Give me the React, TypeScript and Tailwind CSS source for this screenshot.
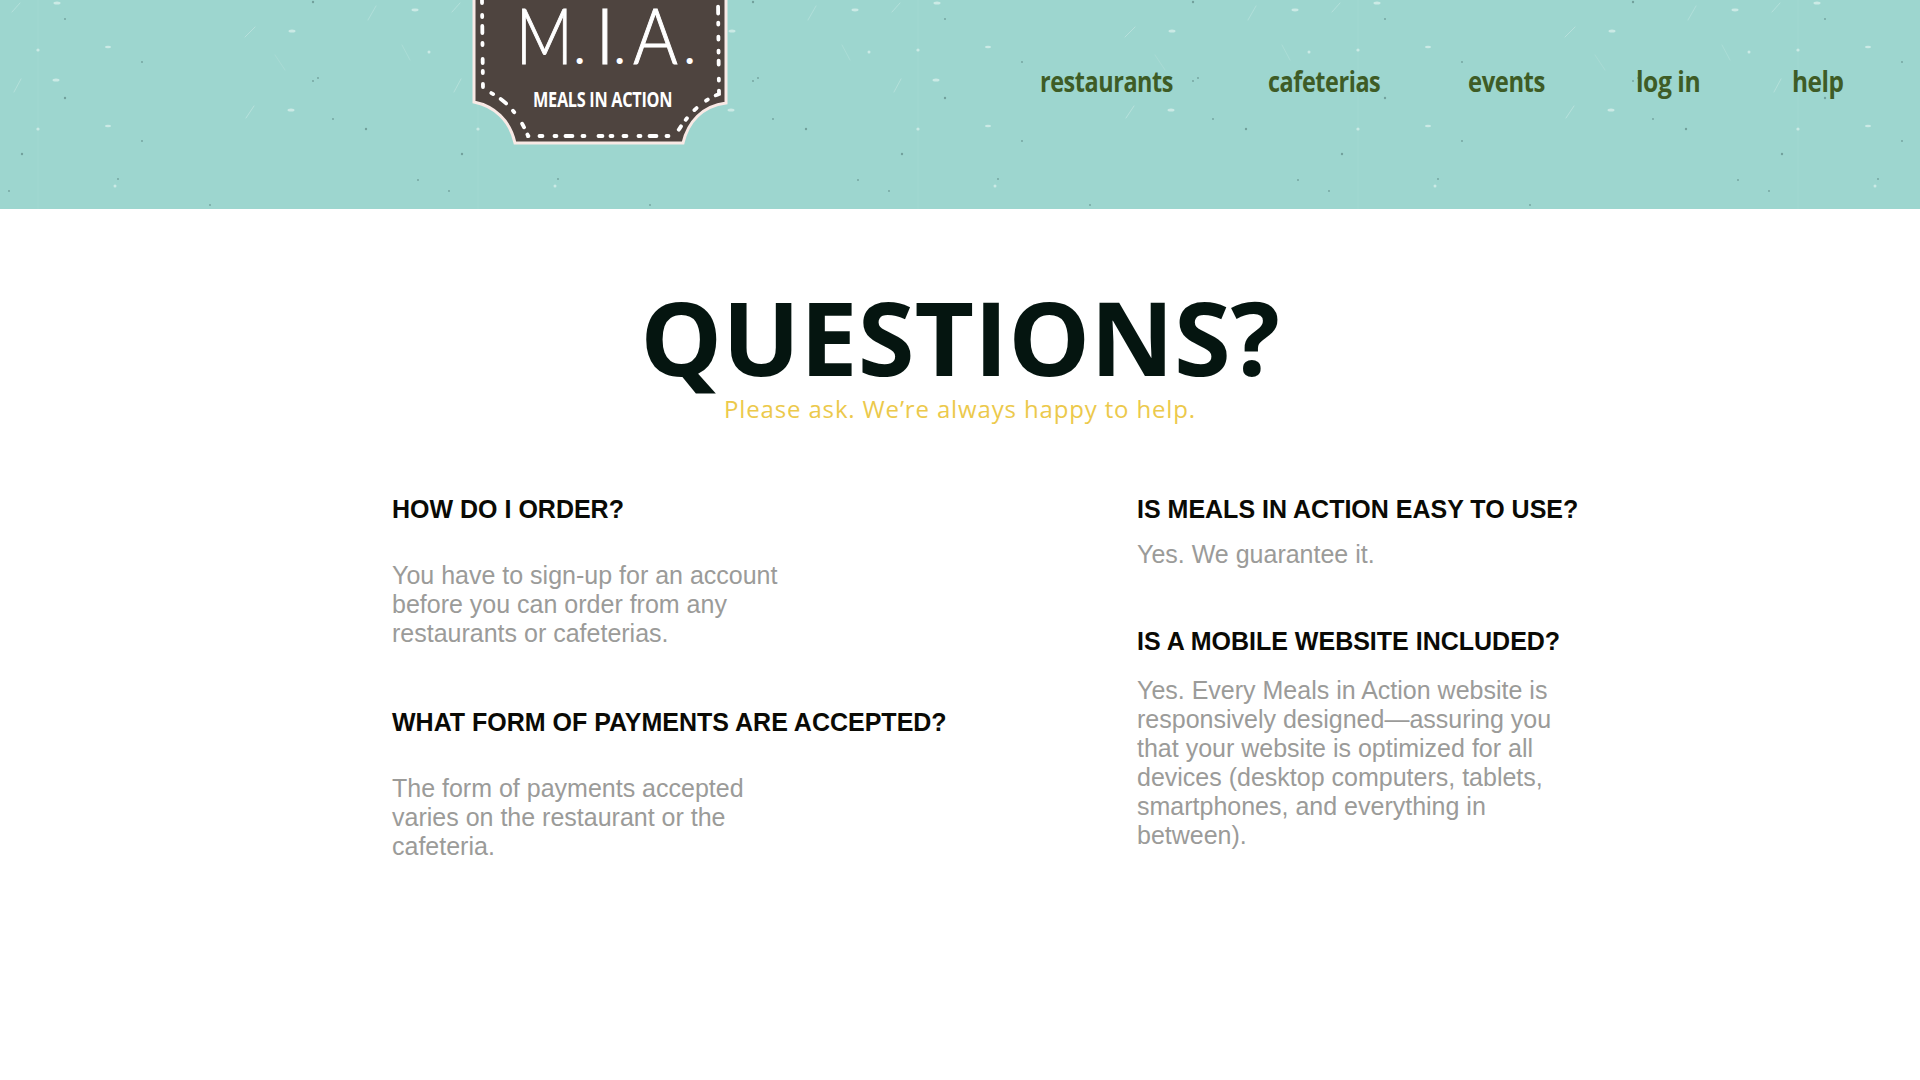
const DARK: [number, number][] = [[65,19],[142,62],[313,2],[318,78],[333,119],[65,98],[142,141],[313,81],[22,154],[118,179],[9,191],[366,129],[418,180],[210,205]];
const LIGHT: [string, number][] = [
  ["M12 12 L20 3",0.6],["M245 37 L255 27",0.7],["M368 20 L376 6",0.5],["M14 92 L21 79",0.6],["M246 118 L254 106",0.7],["M402 45 L410 60",0.35],["M275 55 L285 70",0.3],["M38 0 L38 237",0.12],
];
const BLOBS: [number, number, number, number][] = [[57,3,3.5,1.5],[292,31,3.5,1.6],[415,10,3.5,1.4],[56,80,3.5,1.6],[291,110,3.5,1.6],[108,47,3,1.2],[108,126,3,1.2],[38,50,1.6,1.6],[38,129,1.6,1.6],[429,52,1.5,1.5],[115,186,1.5,1.5]];

function Texture() {
  return (
    <svg className="absolute inset-0 h-full w-full" aria-hidden="true">
      <defs>
        <pattern id="paper" x="0" y="0" width="440" height="237" patternUnits="userSpaceOnUse">
          {LIGHT.map(([d, o], i) => <path key={i} d={d} stroke="#c3e6e1" strokeWidth="1" fill="none" opacity={o} strokeLinecap="round" />)}
          {BLOBS.map(([x, y, rx, ry], i) => <ellipse key={i} cx={x} cy={y} rx={rx} ry={ry} fill="#e4f5f2" opacity="0.65" />)}
          {DARK.map(([x, y], i) => <circle key={i} cx={x} cy={y} r={i % 3 === 2 ? 1.2 : 0.9} fill="#4f7571" opacity="0.55" />)}
        </pattern>
      </defs>
      <rect width="100%" height="100%" fill="url(#paper)" />
    </svg>
  );
}

function Logo() {
  const mark = "block font-['Lato'] text-[76px] font-light leading-[66px] text-white [-webkit-text-stroke:1px_white]";
  const dot = "block font-['Lato'] text-[48px] font-normal leading-[48px] text-white";
  return (
    <div className="relative h-[146px] w-[256px] shrink-0">
      <svg className="absolute inset-0" width="256" height="146" viewBox="0 0 256 146" aria-hidden="true">
        <path d="M2 -4 L2 102 C22 106 38 120 43 143 L211 143 C216 122 230 106 254 103 L254 -4 Z" fill="#4e443f" stroke="#f8e9e5" strokeWidth="3" />
        <path d="M10 0 L11 90 C24 93 45 108 56 136 L203 136 C212 120 226 102 247 94 L246 0" fill="none" stroke="#ffffff" strokeWidth="3.8" strokeLinecap="round" strokeDasharray="3 12 2 9 7 10 2 14 4 8 2 11" />
      </svg>
      <div className="relative flex flex-col">
        <div className="flex items-baseline pl-[44px] pt-[2px]">
          <span className={`${mark} w-[58px] origin-left scale-x-[0.82]`}>M</span>
          <span className={`${dot} w-[21px]`}>.</span>
          <span className={`${mark} w-[19px]`}>I</span>
          <span className={`${dot} w-[19px]`}>.</span>
          <span className={`${mark} w-[51px] origin-left scale-x-[0.9]`}>A</span>
          <span className={dot}>.</span>
        </div>
        <span className="ml-[61px] mt-[16px] origin-left scale-x-[0.74] font-['Open_Sans'] text-[22px] font-bold leading-[24px] tracking-[-0.4px] text-white whitespace-nowrap">MEALS IN ACTION</span>
      </div>
    </div>
  );
}

const NAV = [
  { t: "restaurants", c: "scale-x-[0.835]" },
  { t: "cafeterias", c: "scale-x-[0.835]" },
  { t: "events", c: "scale-x-[0.85]" },
  { t: "log in", c: "scale-x-[0.88] translate-x-[1px]" },
  { t: "help", c: "scale-x-[0.87]" },
];

function QA({ q, a, gap }: { q: string; a: string[]; gap: string }) {
  return (
    <div>
      <h2 className="font-['Liberation_Sans'] text-[25px] font-bold leading-[29px] text-[#0a0a05] whitespace-nowrap">{q}</h2>
      <p className={`${gap} font-['Liberation_Sans'] text-[25px] leading-[29px] text-[#9b9b99]`}>
        {a.map((l, i) => <span key={i} className="block whitespace-nowrap">{l}</span>)}
      </p>
    </div>
  );
}

export default function App() {
  return (
    <div className="min-h-[1080px] bg-white">
      <header className="relative flex h-[209px] items-start overflow-hidden bg-[#9dd6cf] pl-[472px] pr-[77px]">
        <Texture />
        <Logo />
        <nav className="relative ml-auto mt-[61px] grid grid-cols-[228px_200px_167px_157px_51px]">
          {NAV.map((n) => (
            <a key={n.t} className={`${n.c} block origin-left font-['Open_Sans'] text-[28px] font-bold leading-[40px] tracking-[-0.5px] text-[#3e5c26] whitespace-nowrap`}>{n.t}</a>
          ))}
        </nav>
      </header>
      <main>
        <div className="flex flex-col items-center pt-[71px]">
          <h1 className="font-['Open_Sans'] text-[103px] font-bold leading-[112px] text-[#051510]">QUESTIONS?</h1>
          <p className="font-['Open_Sans'] text-[24px] leading-[34px] tracking-[0.85px] text-[#ecc94b]">Please ask. We’re always happy to help.</p>
        </div>
        <div className="mt-[69px] grid grid-cols-[745px_auto] pl-[392px]">
          <div className="flex flex-col gap-[60px]">
            <QA q="HOW DO I ORDER?" gap="mt-[37px]" a={["You have to sign-up for an account","before you can order from any","restaurants or cafeterias."]} />
            <QA q="WHAT FORM OF PAYMENTS ARE ACCEPTED?" gap="mt-[37px]" a={["The form of payments accepted","varies on the restaurant or the","cafeteria."]} />
          </div>
          <div className="flex flex-col gap-[58px]">
            <QA q="IS MEALS IN ACTION EASY TO USE?" gap="mt-[16px]" a={["Yes. We guarantee it."]} />
            <QA q="IS A MOBILE WEBSITE INCLUDED?" gap="mt-[20px]" a={["Yes. Every Meals in Action website is","responsively designed—assuring you","that your website is optimized for all","devices (desktop computers, tablets,","smartphones, and everything in","between)."]} />
          </div>
        </div>
      </main>
    </div>
  );
}
